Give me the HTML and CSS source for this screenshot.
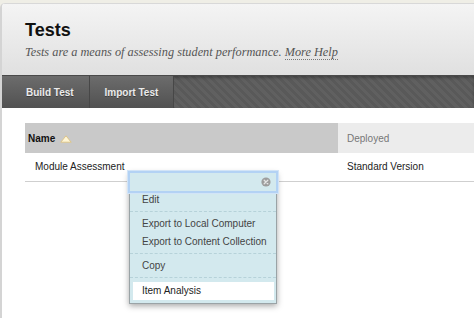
FILE: index.html
```html
<!DOCTYPE html>
<html lang="en">
<head>
    <meta charset="UTF-8">
    <title>Tests</title>
    <link rel="stylesheet" href="styles.css">
</head>
<body>
    <div class="page">
        <div class="page-header">
            <h1>Tests</h1>
            <p class="subtitle">Tests are a means of assessing student performance. <a href="#" class="help-link">More Help</a></p>
        </div>

        <div class="toolbar">
            <a href="#" class="tool-button">Build Test</a>
            <a href="#" class="tool-button">Import Test</a>
            <div class="toolbar-fill"></div>
        </div>

        <div class="content">
            <table class="list">
                <thead>
                    <tr>
                        <th class="col-name">Name
                            <svg class="sort-icon" width="12" height="8" viewBox="0 0 12 8">
                                <polygon points="6,0.8 11.2,7.2 0.8,7.2" fill="#fff6d6" stroke="#dcc48a" stroke-width="1"/>
                            </svg>
                        </th>
                        <th class="col-deployed">Deployed</th>
                    </tr>
                </thead>
                <tbody>
                    <tr>
                        <td>Module Assessment</td>
                        <td>Standard Version</td>
                    </tr>
                </tbody>
            </table>
        </div>

        <div class="context-menu">
            <div class="menu-head">
                <svg class="close-icon" width="10" height="10" viewBox="0 0 10 10">
                    <circle cx="5" cy="5" r="4.6" fill="#9d9d9d"/>
                    <path d="M3.2 3.2 L6.8 6.8 M6.8 3.2 L3.2 6.8" stroke="#e4e4e4" stroke-width="1.3" stroke-linecap="round"/>
                </svg>
            </div>
            <ul class="menu-group">
                <li>Edit</li>
            </ul>
            <ul class="menu-group">
                <li>Export to Local Computer</li>
                <li>Export to Content Collection</li>
            </ul>
            <ul class="menu-group">
                <li>Copy</li>
            </ul>
            <ul class="menu-group">
                <li class="active">Item Analysis</li>
            </ul>
        </div>
    </div>
</body>
</html>
```

FILE: styles.css
```css
* {
    box-sizing: border-box;
}

body {
    margin: 0;
    background: #efeee6;
    font-family: "Liberation Sans", Arial, sans-serif;
    color: #222;
}

.page {
    position: relative;
    margin-top: 3px;
    min-height: 315px;
    background: #fff;
    border-left: 2px solid #d4d4d4;
    border-top-left-radius: 5px;
    overflow: hidden;
}

/* header */
.page-header {
    height: 72px;
    padding: 15px 23px 0;
    border-top: 1px solid #d8d8d8;
    background: linear-gradient(#f4f4f4, #e0e0e0);
}

.page-header h1 {
    margin: 0;
    font-size: 18px;
    line-height: 22px;
    font-weight: bold;
    color: #111;
}

.subtitle {
    margin: 3px 0 0;
    font-family: "Liberation Serif", "Times New Roman", serif;
    font-style: italic;
    font-size: 12.3px;
    line-height: 16px;
    color: #555;
}

.help-link {
    color: #555;
    text-decoration: none;
    border-bottom: 1px dotted #777;
}

/* toolbar */
.toolbar {
    display: flex;
    height: 33px;
    border-top: 1px solid #4a4a4a;
    box-shadow: inset 0 2px 3px rgba(0, 0, 0, 0.25);
    background: repeating-linear-gradient(45deg, #595959 0, #595959 3px, #606060 3px, #606060 6px);
}

.tool-button {
    display: flex;
    align-items: center;
    padding: 0 15px;
    font-size: 10px;
    font-weight: bold;
    color: #ebebeb;
    text-decoration: none;
    text-shadow: 0 1px 0 rgba(0, 0, 0, 0.35);
    background: linear-gradient(#6c6c6c, #515151);
    border-right: 1px solid #474747;
}

.tool-button:first-child {
    padding-left: 24px;
}

.toolbar-fill {
    flex: 1;
}

/* list */
.content {
    padding: 15px 0 0 23px;
}

.list {
    width: 449px;
    border-collapse: collapse;
    table-layout: fixed;
    font-size: 10px;
}

.list th {
    height: 30px;
    text-align: left;
    font-weight: normal;
}

.col-name {
    width: 313px;
    padding-left: 3px;
    background: #c9c9c9;
    font-weight: bold !important;
    color: #111;
}

.col-deployed {
    padding-left: 9px;
    background: #ececec;
    color: #777;
}

.sort-icon {
    vertical-align: -1px;
    margin-left: 2px;
}

.list td {
    height: 28px;
    padding-left: 10px;
    border-bottom: 1px solid #cfcfcf;
    color: #222;
}

.list td + td {
    padding-left: 9px;
}

/* context menu */
.context-menu {
    position: absolute;
    left: 127px;
    top: 169px;
    width: 148px;
    background: #d3e9ee;
    border: 1px solid #9aa3a6;
    box-shadow: 0 2px 6px rgba(0, 0, 0, 0.35);
    font-size: 10px;
    color: #444;
}

.menu-head {
    display: flex;
    justify-content: flex-end;
    align-items: center;
    height: 18px;
    padding-right: 5px;
    box-shadow: 0 0 0 2px #b3d2f4, 0 0 0 3px #d2e4f7;
}

.menu-group {
    list-style: none;
    margin: 0;
    padding: 3px 2px 2px 3px;
    border-bottom: 1px dashed #b6d2d9;
}

.menu-group:first-of-type {
    padding-top: 0;
}

.menu-group:last-child {
    border-bottom: none;
    padding-top: 4px;
    padding-bottom: 3px;
}

.menu-group li {
    height: 18px;
    line-height: 18px;
    padding-left: 9px;
}

.menu-group li.active {
    background: #fff;
    color: #222;
}
```
